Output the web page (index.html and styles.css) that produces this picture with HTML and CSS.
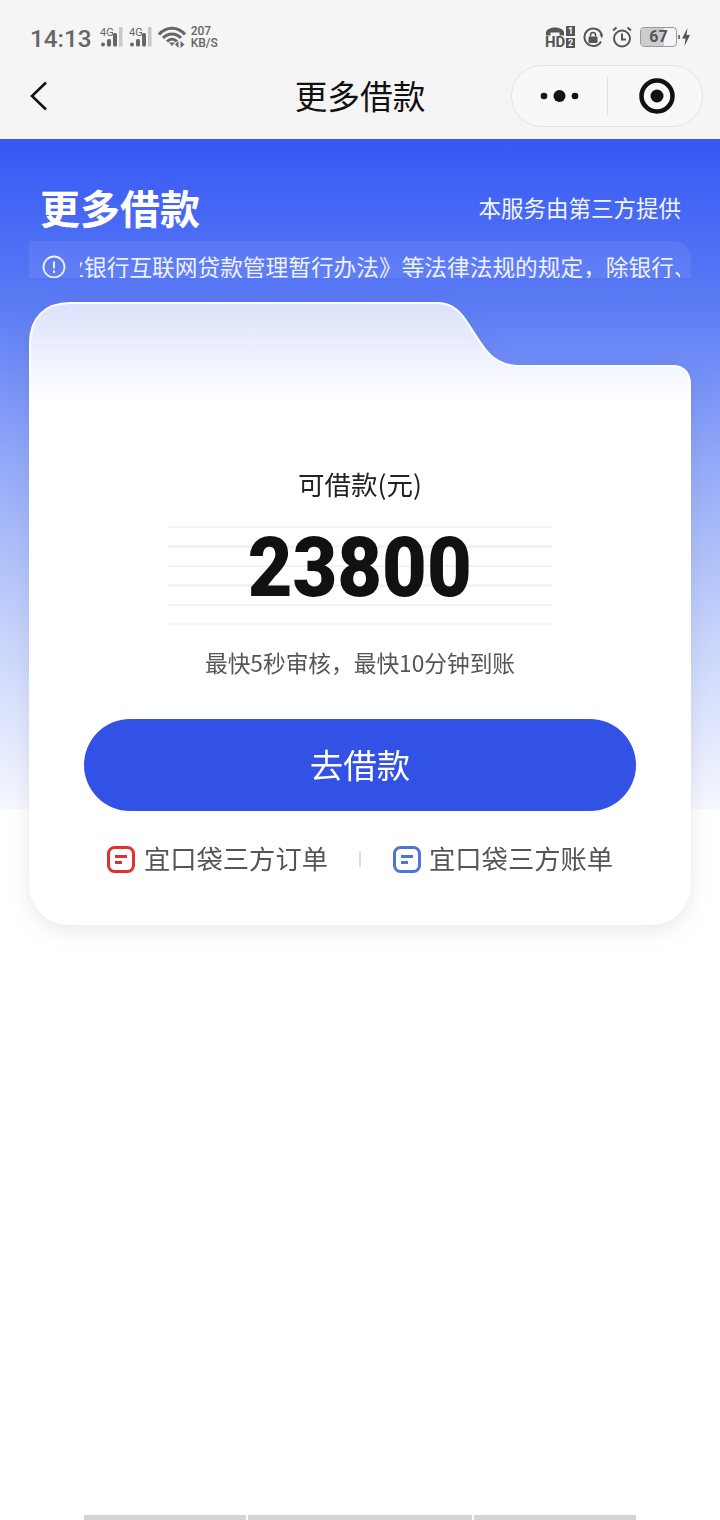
FILE: index.html
```html
<!DOCTYPE html>
<html lang="zh-CN">

<head>
    <meta charset="UTF-8" />
    <meta name="viewport" content="width=device-width, initial-scale=1.0" />
    <title>更多借款</title>
    <link rel="stylesheet" href="styles.css">
</head>

<body>
    <div class="top_area">
        <div class="status_bar">
            <div class="status_left">
                <span class="time">14:13</span>
                <svg class="signal" width="24" height="24" viewBox="0 0 24 24">
                    <text x="0" y="10" class="signal_text">4G</text>
                    <rect x="1" y="16.500" width="4" height="4" rx="2" fill="#666" />
                    <rect x="7" y="13" width="4" height="7.500" rx="1.500" fill="#666" />
                    <rect x="13" y="7" width="4" height="13.500" rx="1.500" fill="#666" />
                    <rect x="19" y="1" width="3.500" height="19.500" fill="#c8c8c8" />
                </svg>
                <svg class="signal" width="24" height="24" viewBox="0 0 24 24">
                    <text x="0" y="10" class="signal_text">4G</text>
                    <rect x="1" y="16.500" width="4" height="4" rx="2" fill="#666" />
                    <rect x="7" y="13" width="4" height="7.500" rx="1.500" fill="#666" />
                    <rect x="13" y="7" width="4" height="13.500" rx="1.500" fill="#666" />
                    <rect x="19" y="1" width="3.500" height="19.500" fill="#c8c8c8" />
                </svg>
                <svg class="wifi" width="29" height="24" viewBox="0 0 29 24">
                    <path d="M1 8.500C8 0 20 0 27 8.500M5 12C10 6.500 18 6.500 23 12M9 15.500C12 12.500 16 12.500 19 15.500" fill="none" stroke="#666" stroke-width="3" />
                    <path d="M11 16.500h6l-3 3.500z" fill="#666" />
                    <path d="M20.500 15v7l-3.500-3.500zM22.500 15v7l4-3.500z" fill="#666" />
                </svg>
                <div class="speed">207<br>KB/S</div>
            </div>
            <div class="status_right">
                <div class="hd_icon">
                    <div class="hd_left">
                        <svg width="20" height="10" viewBox="0 0 20 10">
                            <path d="M1 9.500V6C3 0 17 0 19 6V9.500H14.500V6.500H5.500V9.500Z" fill="#555" />
                        </svg>
                        <div class="hd_text">HD</div>
                    </div>
                    <div class="hd_right">
                        <span class="hd_box">1</span>
                        <span class="hd_box">2</span>
                    </div>
                </div>
                <svg class="lock_icon" width="20" height="21" viewBox="0 0 20 21">
                    <path d="M18 14.500A8.800 8.800 0 1 1 18.800 8" fill="none" stroke="#555" stroke-width="2" />
                    <path d="M19 11.500L16.500 7.500H20Z" fill="#555" />
                    <rect x="5.500" y="9.500" width="9" height="6.500" rx="1" fill="#555" />
                    <path d="M7.500 9.500V8a2.500 2.500 0 0 1 5 0V9.500" fill="none" stroke="#555" stroke-width="1.500" />
                </svg>
                <svg class="alarm_icon" width="20" height="22" viewBox="0 0 20 22">
                    <circle cx="10" cy="12.500" r="8" fill="none" stroke="#555" stroke-width="2" />
                    <path d="M10 7.500V13.500H14" fill="none" stroke="#555" stroke-width="2" />
                    <path d="M1 4.500L4.500 1.500M19 4.500L15.500 1.500" fill="none" stroke="#555" stroke-width="2" />
                </svg>
                <div class="battery">
                    <div class="battery_body"><span class="battery_fill"></span><span class="battery_num">67</span></div>
                    <span class="battery_tip"></span>
                </div>
                <svg class="bolt_icon" width="8" height="18" viewBox="0 0 8 18">
                    <path d="M5.500 0L0 10.500H3.500L2.500 18L8 7H4.500Z" fill="#555" />
                </svg>
            </div>
        </div>
        <div class="nav_bar">
            <svg class="back_icon" width="18" height="30" viewBox="0 0 18 30">
                <path d="M16 1.500L2 15L16 28.500" fill="none" stroke="#111" stroke-width="2.600" />
            </svg>
            <h1 class="nav_title">更多借款</h1>
            <div class="capsule">
                <svg width="39" height="14" viewBox="0 0 39 14">
                    <circle cx="4" cy="7" r="3.300" fill="#111" />
                    <circle cx="19.500" cy="7" r="6" fill="#111" />
                    <circle cx="35" cy="7" r="3.300" fill="#111" />
                </svg>
                <span class="capsule_line"></span>
                <svg width="36" height="36" viewBox="0 0 36 36">
                    <circle cx="18" cy="18" r="15.500" fill="none" stroke="#111" stroke-width="4.500" />
                    <circle cx="18" cy="18" r="6.500" fill="#111" />
                </svg>
            </div>
        </div>
    </div>

    <main class="hero">
        <div class="hero_head">
            <h2 class="hero_title">更多借款</h2>
            <span class="hero_note">本服务由第三方提供</span>
        </div>

        <div class="notice">
            <svg class="notice_icon" width="24" height="24" viewBox="0 0 24 24">
                <circle cx="12" cy="12" r="10.500" fill="none" stroke="#eef2ff" stroke-width="1.800" />
                <path d="M12 6.500V13.500M12 15.500V18" fill="none" stroke="#eef2ff" stroke-width="2" />
            </svg>
            <div class="notice_clip">
                <span class="notice_text">《商业银行互联网贷款管理暂行办法》等法律法规的规定，除银行、消费金融公司外</span>
            </div>
        </div>

        <section class="card">
            <svg class="card_top" width="662" height="100" viewBox="0 0 662 100">
                <defs>
                    <linearGradient id="folderFill" x1="0" y1="0" x2="0" y2="1">
                        <stop offset="0" stop-color="#dbe2fb" />
                        <stop offset="1" stop-color="#ffffff" />
                    </linearGradient>
                </defs>
                <path d="M1 100V41C1 16 16 1 41 1H408C420 1 428 6 436 17L451 40C459 52 468 63 488 64H644C655 64 661 71 661 82V100Z" fill="url(#folderFill)" stroke="#ffffff" stroke-width="2" />
            </svg>
            <div class="card_body">
                <div class="amount_label">可借款(元)</div>
                <div class="amount_box"><span class="amount_num">23800</span></div>
                <div class="amount_tip">最快5秒审核，最快10分钟到账</div>
                <button class="loan_btn">去借款</button>
                <div class="links">
                    <div class="link_item">
                        <svg width="28" height="27" viewBox="0 0 28 27">
                            <rect x="1.500" y="1.500" width="25" height="24" rx="6" fill="none" stroke="#e23030" stroke-width="3" />
                            <path d="M8 10.500H20M8 16.500H15" fill="none" stroke="#e23030" stroke-width="3" />
                        </svg>
                        <span class="link_text">宜口袋三方订单</span>
                    </div>
                    <span class="link_line"></span>
                    <div class="link_item link_blue">
                        <svg width="28" height="27" viewBox="0 0 28 27">
                            <rect x="1.500" y="1.500" width="25" height="24" rx="6" fill="none" stroke="#4b74dc" stroke-width="3" />
                            <path d="M8 10.500H20M8 16.500H15" fill="none" stroke="#4b74dc" stroke-width="3" />
                        </svg>
                        <span class="link_text">宜口袋三方账单</span>
                    </div>
                </div>
            </div>
        </section>
    </main>

    <div class="bottom_bar">
        <span class="bar_a"></span>
        <span class="bar_b"></span>
        <span class="bar_a"></span>
    </div>
</body>

</html>
```

FILE: styles.css
```css
* {
    box-sizing: border-box;
}

body {
    margin: 0;
    height: 1520px;
    overflow: hidden;
    display: flex;
    flex-direction: column;
    background-color: #ffffff;
    font-family: "Noto Sans CJK SC", Roboto, sans-serif;
}

.top_area {
    height: 139px;
    background-color: #f5f5f5;
}

.status_bar {
    height: 64px;
    padding: 12px 30px 0 30px;
    display: flex;
    justify-content: space-between;
    align-items: center;
    color: #666666;
    font-family: Roboto, sans-serif;
}

.status_left,
.status_right {
    display: flex;
    align-items: center;
}

.time {
    font-size: 24.300px;
    font-weight: 500;
    margin-right: 8px;
}

.signal {
    margin-right: 5px;
}

.signal_text {
    font-family: Roboto, sans-serif;
    font-size: 11px;
    fill: #666666;
}

.wifi {
    margin-right: 4px;
}

.speed {
    font-size: 12px;
    font-weight: 500;
    line-height: 12px;
    margin-bottom: 2px;
}

.status_right {
    margin-bottom: 2px;
}

.hd_icon {
    width: 30px;
    display: flex;
    justify-content: space-between;
    color: #555555;
}

.hd_left svg {
    display: block;
}

.hd_text {
    font-size: 15px;
    line-height: 12px;
    font-weight: 700;
}

.hd_right {
    display: flex;
    flex-direction: column;
    gap: 2px;
}

.hd_box {
    width: 9px;
    height: 10px;
    font-size: 9px;
    line-height: 10px;
    font-weight: 700;
    text-align: center;
    color: #ffffff;
    background-color: #555555;
}

.lock_icon {
    margin: 0 9px 0 8px;
}

.alarm_icon {
    margin-right: 8px;
}

.battery {
    display: flex;
    align-items: center;
}

.battery_body {
    position: relative;
    width: 37px;
    height: 20px;
    border: 1px solid #999999;
    border-radius: 4px;
    overflow: hidden;
    text-align: center;
}

.battery_fill {
    position: absolute;
    left: 0;
    top: 0;
    bottom: 0;
    width: 67%;
    background-color: #cccccc;
}

.battery_num {
    position: relative;
    font-size: 16px;
    line-height: 18px;
    font-weight: 700;
    color: #555555;
    display: block;
}

.battery_tip {
    width: 2px;
    height: 4px;
    margin-left: 1px;
    background-color: #777777;
}

.bolt_icon {
    margin-left: 2px;
}

.nav_bar {
    position: relative;
    height: 75px;
    display: flex;
    align-items: center;
    justify-content: space-between;
    padding: 0 17px 12px 30px;
}

.nav_title {
    position: absolute;
    left: 0;
    right: 0;
    top: 7px;
    margin: 0;
    text-align: center;
    font-size: 32.700px;
    line-height: 48px;
    font-weight: 400;
    color: #111111;
}

.capsule {
    width: 192px;
    height: 62px;
    margin-top: 1px;
    border: 1px solid #e4e4e4;
    border-radius: 31px;
    background-color: #f8f8f8;
    display: flex;
    align-items: center;
    padding: 0 27px 0 28px;
}

.capsule_line {
    width: 1px;
    height: 38px;
    margin: 0 31px 0 28px;
    background-color: #e2e2e2;
}

.hero {
    padding-top: 46px;
    background: linear-gradient(#3558f5 0, #5a7af4 160px, #95abf8 330px, #c8d4fb 500px, #f6f8fe 670px) no-repeat;
    background-size: 100% 670px;
}

.hero_head {
    height: 44px;
    padding: 0 39px 0 40px;
    display: flex;
    justify-content: space-between;
    align-items: center;
    color: #ffffff;
}

.hero_title {
    margin: 0;
    font-size: 40px;
    line-height: 44px;
    font-weight: 700;
}

.hero_note {
    font-size: 22.500px;
    color: #f2f5ff;
}

.notice {
    height: 37px;
    margin: 12px 29px 0;
    padding: 14px 11px 0 13px;
    display: flex;
    align-items: center;
    overflow: hidden;
    background-color: rgba(255, 255, 255, 0.07);
    border-radius: 0 18px 0 0;
}

.notice_clip {
    flex: 1;
    margin-left: 14px;
    overflow: hidden;
    white-space: nowrap;
    color: #eef2ff;
    font-size: 22.700px;
    line-height: 30px;
}

.notice_text {
    display: block;
    margin-left: -64px;
}

.card {
    margin: 24px 29px 0;
    filter: drop-shadow(0 6px 10px rgba(60, 70, 110, 0.12));
}

.card_top {
    display: block;
}

.card_body {
    height: 523px;
    padding-top: 63px;
    background-color: #ffffff;
    border-radius: 0 0 40px 40px;
    display: flex;
    flex-direction: column;
    align-items: center;
}

.amount_label {
    font-size: 26.500px;
    line-height: 38px;
    color: #222222;
}

.amount_box {
    width: 384px;
    height: 100px;
    margin-top: 23px;
    text-align: center;
    background: repeating-linear-gradient(#f0f3fb 0, #f0f3fb 2px, transparent 2px, transparent 19.500px);
}

.amount_num {
    display: inline-block;
    font-family: Roboto, sans-serif;
    font-size: 84px;
    font-weight: 900;
    line-height: 84px;
    color: #111111;
    transform: scaleX(0.92);
}

.amount_tip {
    margin-top: 20px;
    font-size: 22.700px;
    line-height: 34px;
    color: #555555;
}

.loan_btn {
    width: 552px;
    height: 92px;
    margin-top: 39px;
    padding: 0 0 4px;
    border: none;
    border-radius: 46px;
    background-color: #3252e6;
    color: #ffffff;
    font-family: inherit;
    font-size: 33.500px;
}

.links {
    height: 30px;
    margin-top: 33px;
    display: flex;
    align-items: center;
    color: #555555;
    font-size: 26.300px;
}

.link_item {
    display: flex;
    align-items: center;
    gap: 9px;
    line-height: 30px;
}

.link_blue {
    gap: 8px;
}

.link_text {
    padding-bottom: 2px;
}

.link_line {
    width: 2px;
    height: 16px;
    margin: 0 32px 0 31px;
    background-color: #dddddd;
}

.bottom_bar {
    margin-top: auto;
    height: 5px;
    padding: 0 84px;
    display: flex;
    gap: 2px;
}

.bar_a,
.bar_b {
    background-color: #d4d4d4;
}

.bar_a {
    width: 162px;
}

.bar_b {
    width: 224px;
}
```
